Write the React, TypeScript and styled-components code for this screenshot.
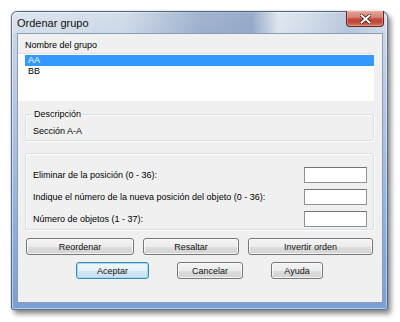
import styled, { createGlobalStyle } from "styled-components";

const GlobalStyle = createGlobalStyle`
	html, body {
		margin: 0;
		padding: 0;
		background: #fff;
	}
	body {
		font-family: "Liberation Sans", Arial, sans-serif;
		font-size: 9px;
		color: #000;
	}
`

const Page = styled.div`
	padding: 11px 0 0 11px;
	width: 400px;
	height: 322px;
	box-sizing: border-box;
`

const Window = styled.div`
	width: 377px;
	height: 299px;
	box-sizing: border-box;
	display: flex;
	flex-direction: column;
	padding: 0 4px 6px 5px;
	border: 1px solid rgba(70, 84, 108, 0.75);
	border-radius: 6px 6px 3px 3px;
	background: linear-gradient(180deg, #d3dde9 0px, #c3d2e6 40px, #a3bde1 150px, #85aadc 240px, #789fd6 299px);
	box-shadow: 3px 4px 5px rgba(0, 0, 0, 0.45), 0 0 2px rgba(0, 0, 0, 0.25), inset 0 0 0 1px rgba(255, 255, 255, 0.45);
`

const TitleBar = styled.div`
	height: 21px;
	margin: 0 -4px 0 -5px;
	padding: 0 3px 0 5px;
	display: flex;
	align-items: flex-start;
	border-radius: 5px 5px 0 0;
	background: linear-gradient(90deg,
		rgba(255, 255, 255, 0.2) 0%,
		rgba(255, 255, 255, 0.02) 30%,
		rgba(50, 85, 145, 0.3) 50%,
		rgba(50, 85, 145, 0.36) 64%,
		rgba(255, 255, 255, 0.3) 71%,
		rgba(255, 255, 255, 0.1) 78%,
		rgba(50, 85, 145, 0.14) 90%,
		rgba(255, 255, 255, 0.1) 100%);
`

const Title = styled.span`
	margin-top: 4px;
	font-size: 11px;
	line-height: 14px;
	color: #111;
`

const CloseButton = styled.div`
	margin-left: auto;
	margin-top: -1px;
	width: 38px;
	height: 16px;
	box-sizing: border-box;
	display: flex;
	align-items: center;
	justify-content: center;
	border: 1px solid #5e2a26;
	border-top: none;
	border-radius: 0 0 4px 4px;
	background: linear-gradient(180deg, #e4a597 0%, #d88473 40%, #c2493b 55%, #c14a3a 75%, #d77a62 100%);
	box-shadow: inset 0 0 0 1px rgba(255, 200, 190, 0.35);
`

const Client = styled.div`
	flex: 1;
	display: flex;
	flex-direction: column;
	padding: 0 8px 0 7px;
	border: 1px solid #8b9db5;
	background: #f0f0f0;
`

const Label = styled.div`
	margin-top: 5px;
	line-height: 12px;
	white-space: nowrap;
`

const ListBox = styled.div`
	margin: 2px 0 0 -7px;
	height: 48px;
	padding-left: 7px;
	box-sizing: border-box;
	background: #fff;
	border-top: 1px solid #e2e2e2;
	display: flex;
	flex-direction: column;
`

const ListItem = styled.div<{ $selected?: boolean }>`
	height: 11px;
	line-height: 11px;
	padding-left: 3px;
	background: ${p => p.$selected ? "#3399ff" : "transparent"};
	color: ${p => p.$selected ? "#fff" : "#000"};
	&:first-child {
		margin-top: 1px;
	}
`

const GroupBox = styled.fieldset<{ $top: number; $height: number }>`
	margin: ${p => p.$top}px 0 0 0;
	height: ${p => p.$height}px;
	box-sizing: border-box;
	min-width: 0;
	padding: 0 6px 1px 7px;
	border: 1px solid #d5dfe5;
	border-radius: 3px;
	box-shadow: inset 1px 1px 0 #fff, 1px 1px 0 #fff;
	display: flex;
	flex-direction: column;
`

const Legend = styled.legend`
	padding: 0 1px;
	line-height: 10px;
	margin-left: 0;
`

const Value = styled.div`
	margin-top: 6px;
	line-height: 12px;
`

const FieldRow = styled.div`
	display: flex;
	align-items: center;
	justify-content: space-between;
	height: 16px;
	margin-top: 6px;
	&:first-child {
		margin-top: 13px;
	}
`

const TextBox = styled.div`
	width: 63px;
	height: 16px;
	box-sizing: border-box;
	background: #fff;
	border: 1px solid #8f9396;
	border-top-color: #707478;
`

const ButtonRow = styled.div<{ $top: number; $left: number; $gap: number }>`
	display: flex;
	margin-top: ${p => p.$top}px;
	padding-left: ${p => p.$left}px;
	gap: ${p => p.$gap}px;
`

const Button = styled.div<{ $width: number; $default?: boolean }>`
	width: ${p => p.$width}px;
	height: 17px;
	box-sizing: border-box;
	display: flex;
	align-items: center;
	justify-content: center;
	border: 1px solid ${p => p.$default ? "#3c87b8" : "#777"};
	border-radius: 3px;
	background: ${p => p.$default
		? "linear-gradient(180deg, #f0f7fb 0%, #e6f1f8 50%, #d3e6f2 51%, #c9e0ef 100%)"
		: "linear-gradient(180deg, #f4f4f4 0%, #ececec 50%, #dedede 51%, #d2d2d2 100%)"};
	box-shadow: inset 0 0 0 1px ${p => p.$default ? "#9fdcf5" : "rgba(255, 255, 255, 0.75)"};
	color: #111;
	white-space: nowrap;
`

export default function App() {
	return (
		<Page>
			<GlobalStyle />
			<Window>
				<TitleBar>
					<Title>Ordenar grupo</Title>
					<CloseButton>
						<svg width="11" height="10" viewBox="0 0 11 10">
							<path d="M1.5 1.5 L9.5 8.5 M9.5 1.5 L1.5 8.5" stroke="#3a1512" strokeWidth="3.6" strokeLinecap="square" />
							<path d="M1.5 1.5 L9.5 8.5 M9.5 1.5 L1.5 8.5" stroke="#fff" strokeWidth="2" strokeLinecap="square" />
						</svg>
					</CloseButton>
				</TitleBar>
				<Client>
					<Label>Nombre del grupo</Label>
					<ListBox>
						<ListItem $selected>AA</ListItem>
						<ListItem>BB</ListItem>
					</ListBox>
					<GroupBox $top={8} $height={32}>
						<Legend>Descripción</Legend>
						<Value>Sección A-A</Value>
					</GroupBox>
					<GroupBox $top={12} $height={77}>
						<FieldRow>
							<span>Eliminar de la posición (0 - 36):</span>
							<TextBox />
						</FieldRow>
						<FieldRow>
							<span>Indique el número de la nueva posición del objeto (0 - 36):</span>
							<TextBox />
						</FieldRow>
						<FieldRow>
							<span>Número de objetos (1 - 37):</span>
							<TextBox />
						</FieldRow>
					</GroupBox>
					<ButtonRow $top={8} $left={1} $gap={9}>
						<Button $width={108}>Reordenar</Button>
						<Button $width={96}>Resaltar</Button>
						<Button $width={125}>Invertir orden</Button>
					</ButtonRow>
					<ButtonRow $top={7} $left={51} $gap={28}>
						<Button $width={73} $default>Aceptar</Button>
						<Button $width={66}>Cancelar</Button>
						<Button $width={52}>Ayuda</Button>
					</ButtonRow>
				</Client>
			</Window>
		</Page>
	);
}
